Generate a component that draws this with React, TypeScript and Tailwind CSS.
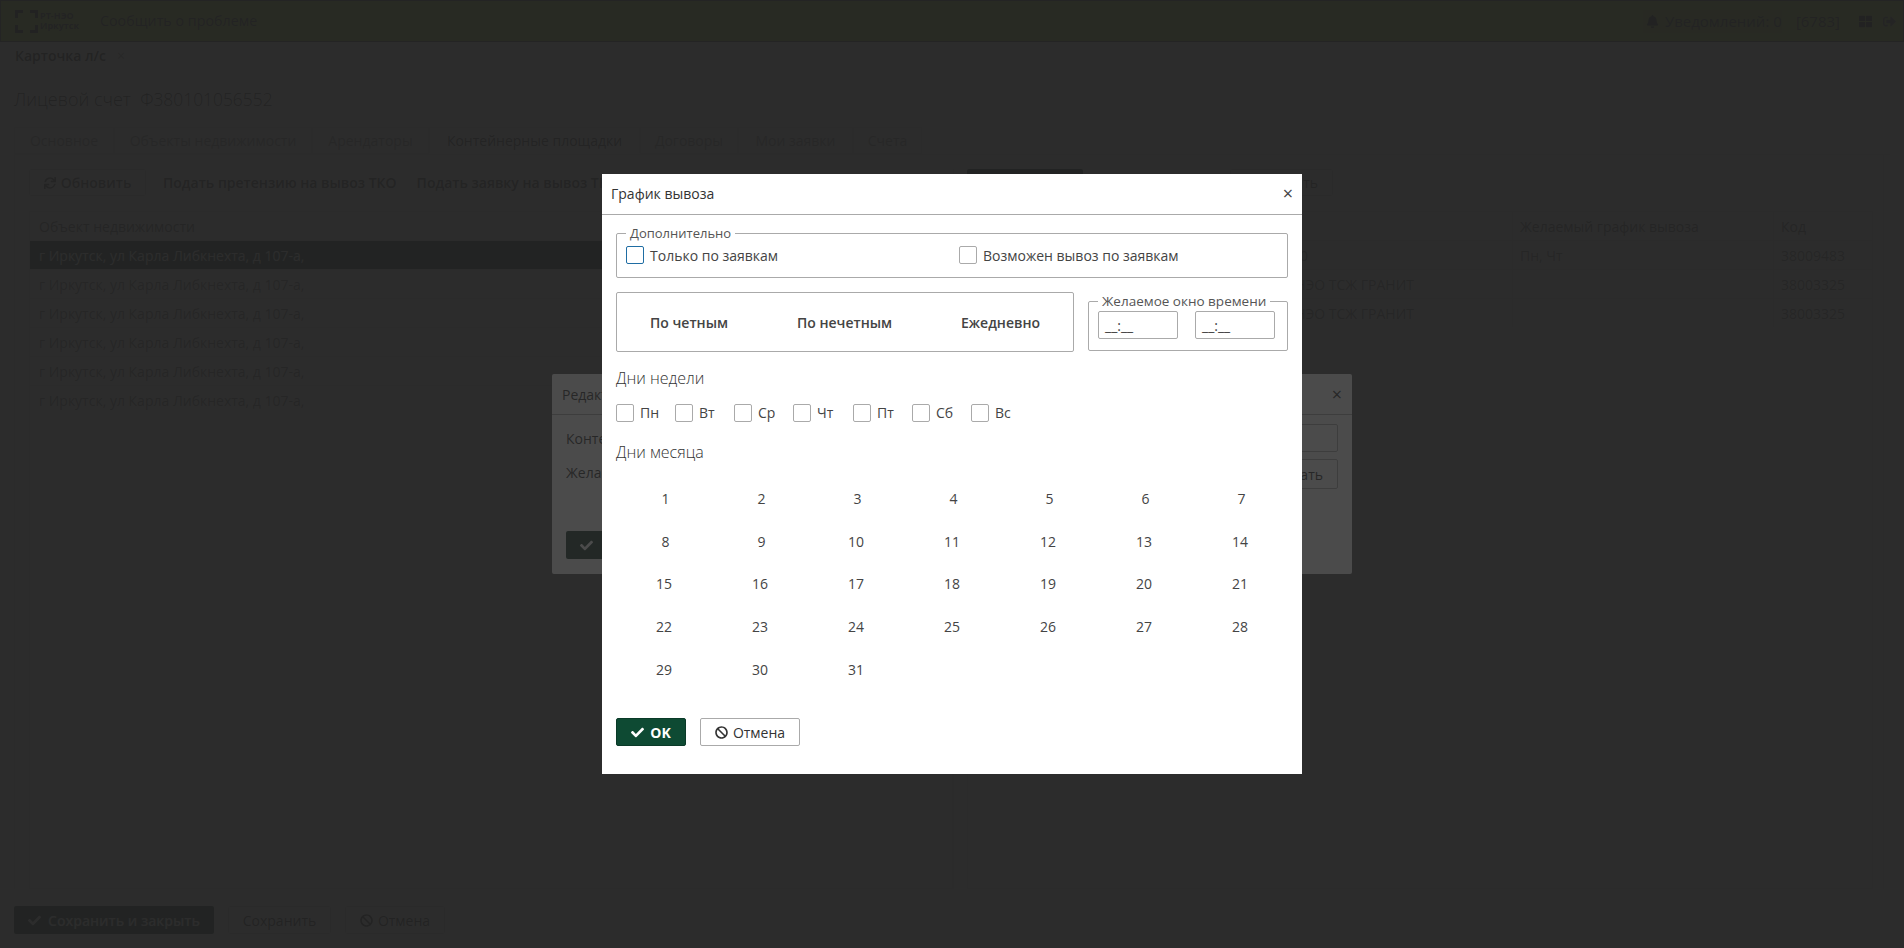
import { FaBan, FaBell, FaCheck, FaSignOutAlt, FaSync, FaThLarge } from 'react-icons/fa';

const FONT = "font-['Open_Sans','Noto_Sans',sans-serif]";

const TABS = [
  { label: 'Основное', width: 'w-[100px]' },
  { label: 'Объекты недвижимости', width: 'w-[198px]' },
  { label: 'Арендаторы', width: 'w-[117px]' },
  { label: 'Контейнерные площадки', width: 'w-[211px]', active: true },
  { label: 'Договоры', width: 'w-[98px]' },
  { label: 'Мои заявки', width: 'w-[115px]' },
  { label: 'Счета', width: 'w-[69px]' },
];

const ADDRESS = 'г Иркутск, ул Карла Либкнехта, д 107-а,';
const WEEK = ['Пн', 'Вт', 'Ср', 'Чт', 'Пт', 'Сб', 'Вс'];
const WEEK_WIDTHS = ['w-[59px]', 'w-[59px]', 'w-[59px]', 'w-[60px]', 'w-[59px]', 'w-[59px]', 'w-[59px]'];
const DAYS = Array.from({ length: 31 }, (_, i) => i + 1);

const RIGHT_ROWS = [
  { name: '0', namePad: 'pr-[106px]', schedule: 'Пн, Чт', code: '38009483' },
  { name: 'РТ-НЭО ТСЖ ГРАНИТ', namePad: '', schedule: '', code: '38003325' },
  { name: 'РТ-НЭО ТСЖ ГРАНИТ', namePad: '', schedule: '', code: '38003325' },
];

function Checkbox({ focused }: { focused?: boolean }) {
  return (
    <span
      className={`block w-[18px] h-[18px] shrink-0 rounded-[2px] border bg-white ${
        focused ? 'border-[#1f6da3]' : 'border-[#aaaaaa]'
      }`}
    />
  );
}

function Logo() {
  return (
    <div className="flex items-center w-[85px] shrink-0">
      <svg width="23" height="23" viewBox="0 0 23 23" fill="none" stroke="#111111" strokeWidth="3">
        <path d="M1.5 8V1.5H8M15 1.5h6.5V8M21.5 15v6.5H15M8 21.5H1.5V15" />
      </svg>
      <div className="ml-[2px] text-[9px] leading-[10px] font-bold text-[#222222]">
        РТ-НЭО
        <br />
        Иркутск
      </div>
    </div>
  );
}

function Page() {
  return (
    <div className="h-[948px] flex flex-col bg-white text-[14px] text-[#222222]">
      {/* top bar */}
      <div className="h-[42px] shrink-0 flex items-center border border-[#333333] bg-[#a0d030] pl-[14px] pr-[7px]">
        <Logo />
        <span className="text-[14.3px]">Сообщить о проблеме</span>
        <div className="ml-auto flex items-center gap-[6px] bg-[#90b828] h-[23px] w-[139px] pl-[3px]">
          <FaBell className="text-[13px] text-black" />
          <span className="text-[15px]">Уведомлений: 0</span>
        </div>
        <span className="ml-[14px] text-[15px]">[6783]</span>
        <FaThLarge className="ml-[19px] text-[13px] text-black" />
        <FaSignOutAlt className="ml-[11px] text-[13px] text-[#444444]" />
      </div>

      {/* open cards */}
      <div className="h-[29px] shrink-0 flex bg-[#eeeeee]">
        <div className="w-[136px] flex items-center bg-white pl-[15px] pb-[2px] font-semibold">
          Карточка л/с <span className="ml-[11px] font-normal text-[#888888]">×</span>
        </div>
      </div>

      <div className="grow min-h-0 flex flex-col px-[14px]">
        <h1 className="mt-[15px] h-[26px] leading-[26px] text-[18px] font-light">
          Лицевой счет&nbsp;&nbsp;<span className="text-[17.4px]">Ф380101056552</span>
        </h1>

        {/* tabs */}
        <div className="mt-[15px] flex h-[28px] border-b border-[#dddddd]">
          {TABS.map((tab) => (
            <div
              key={tab.label}
              className={`${tab.width} flex items-center justify-center border border-[#dddddd] text-[14px] ${
                tab.active ? 'bg-white border-b-white text-[#333333]' : 'bg-[#f2f2f2] text-[#888888]'
              }`}
            >
              {tab.label}
            </div>
          ))}
        </div>

        <div className="grow min-h-0 flex border-x border-[#dddddd] pt-[14px] pl-[14px] pr-[10px] mr-[6px]">
          {/* real estate list */}
          <div className="w-[924px] shrink-0 flex flex-col">
            <div className="h-[27px] flex items-center gap-[17px]">
              <div className="w-[117px] h-[27px] flex items-center justify-center gap-[5px] border border-[#cccccc] rounded-[2px] font-semibold text-[#444444]">
                <FaSync className="text-[12px]" />
                Обновить
              </div>
              <span className="font-semibold text-[#333333]">Подать претензию на вывоз ТКО</span>
              <span className="ml-[3px] font-semibold text-[#333333]">Подать заявку на вывоз ТКО</span>
            </div>
            <div className="mt-[15px] grow border border-[#dddddd]">
              <div className="h-[28px] flex items-center pl-[9px] bg-[#f5f5f5] text-[#555555]">Объект недвижимости</div>
              {Array.from({ length: 6 }, (_, i) => (
                <div
                  key={i}
                  className={`h-[29px] flex items-center pl-[9px] border-t border-[#dddddd] ${
                    i === 0 ? 'bg-[#082a1e] text-white' : 'text-[#666666]'
                  }`}
                >
                  {ADDRESS}
                </div>
              ))}
            </div>
          </div>

          {/* containers list */}
          <div className="grow min-w-0 border-l border-[#dddddd] pl-[13px] flex flex-col">
            <div className="h-[27px] flex items-center gap-[147px]">
              <div className="w-[116px] h-[27px] rounded-[2px] bg-[#082a1e]" />
              <div className="w-[103px] h-[27px] flex items-center justify-end pr-[14px] border border-[#cccccc] rounded-[2px] text-[#444444]">
                Удалить
              </div>
            </div>
            <div className="mt-[15px] grow border border-[#dddddd]">
              <div className="h-[28px] flex items-center bg-[#f5f5f5] text-[#555555]">
                <span className="w-[544px] shrink-0" />
                <span className="w-[261px] shrink-0 h-full flex items-center pl-[7px] border-l border-[#dddddd]">
                  Желаемый график вывоза
                </span>
                <span className="grow h-full flex items-center pl-[7px] border-l border-[#dddddd]">Код</span>
              </div>
              {RIGHT_ROWS.map((row, i) => (
                <div key={i} className="h-[29px] flex items-center border-t border-[#dddddd] text-[#666666]">
                  <span className={`w-[446px] shrink-0 text-right ${row.namePad}`}>{row.name}</span>
                  <span className="w-[98px] shrink-0" />
                  <span className="w-[261px] shrink-0 h-full flex items-center pl-[7px] border-l border-[#dddddd]">
                    {row.schedule}
                  </span>
                  <span className="grow h-full flex items-center pl-[7px] border-l border-[#dddddd]">{row.code}</span>
                </div>
              ))}
            </div>
          </div>
        </div>

        {/* footer actions */}
        <div className="h-[59px] shrink-0 flex items-start gap-[14px] pt-[17px]">
          <div className="w-[200px] h-[28px] flex items-center justify-center gap-[7px] rounded-[2px] bg-[#082a1e] text-white font-semibold">
            <FaCheck className="text-[13px]" />
            Сохранить и закрыть
          </div>
          <div className="w-[103px] h-[28px] flex items-center justify-center border border-[#cccccc] rounded-[2px]">
            Сохранить
          </div>
          <div className="w-[100px] h-[28px] flex items-center justify-center gap-[5px] border border-[#cccccc] rounded-[2px]">
            <FaBan className="text-[13px]" />
            Отмена
          </div>
        </div>
      </div>
    </div>
  );
}

function EditDialog() {
  return (
    <div className="w-[800px] h-[200px] rounded-[2px] bg-white text-[14px] text-[#222222]">
      <div className="h-[41px] flex items-center justify-between px-[10px] border-b border-[#aaaaaa]">
        <span>Редактирование</span>
        <span className="text-[18px] leading-none">×</span>
      </div>
      <div className="px-[14px]">
        <div className="mt-[9px] h-[28px] flex items-center gap-[10px]">
          <span className="w-[100px]">Контейнер</span>
          <span className="grow h-[28px] border border-[#aaaaaa] rounded-[2px]" />
        </div>
        <div className="mt-[7px] h-[30px] flex items-center gap-[10px]">
          <span className="w-[100px] pb-[3px]">Желаемый</span>
          <span className="grow" />
          <span className="w-[110px] h-[30px] flex items-center justify-end pr-[14px] border border-[#aaaaaa] rounded-[2px]">
            Выбрать
          </span>
        </div>
        <div className="mt-[42px] w-[70px] h-[28px] flex items-center pl-[14px] rounded-[2px] bg-[#082a1e] text-white">
          <FaCheck className="text-[13px]" />
        </div>
      </div>
    </div>
  );
}

function ScheduleDialog() {
  return (
    <div className="w-[700px] h-[600px] bg-white text-[14px] text-[#444444]">
      <div className="h-[41px] flex items-center justify-between pl-[9px] pr-[9px] pb-[2px] border-b border-[#aaaaaa]">
        <span className="text-[#333333]">График вывоза</span>
        <span className="text-[18px] leading-none">×</span>
      </div>

      <div className="px-[14px]">
        <fieldset className="mt-[9px] h-[54px] border border-[#aaaaaa] rounded-[2px] pl-[9px]">
          <legend className="px-[4px] text-[13px] leading-[19px] text-[#555555]">Дополнительно</legend>
          <div className="flex items-center h-[24px]">
            <div className="w-[333px] flex items-center gap-[6px]">
              <Checkbox focused />
              <span>Только по заявкам</span>
            </div>
            <div className="flex items-center gap-[6px]">
              <Checkbox />
              <span>Возможен вывоз по заявкам</span>
            </div>
          </div>
        </fieldset>

        <div className="mt-[14px] flex items-start justify-between">
          <div className="w-[458px] h-[60px] flex items-center justify-between px-[33px] border border-[#aaaaaa] rounded-[2px] font-semibold">
            <span>По четным</span>
            <span>По нечетным</span>
            <span>Ежедневно</span>
          </div>
          <fieldset className="w-[200px] h-[59px] border border-[#aaaaaa] rounded-[2px] pl-[9px] pr-[12px]">
            <legend className="px-[4px] text-[13.5px] leading-[19px] text-[#555555]">Желаемое окно времени</legend>
            <div className="flex justify-between">
              <div className="w-[80px] h-[28px] border border-[#aaaaaa] rounded-[2px] pl-[6px] leading-[27px]">__:__</div>
              <div className="w-[80px] h-[28px] border border-[#aaaaaa] rounded-[2px] pl-[6px] leading-[27px]">__:__</div>
            </div>
          </fieldset>
        </div>

        <h3 className="mt-[15px] h-[22px] leading-[22px] text-[16px] font-light text-[#333333]">Дни недели</h3>
        <div className="mt-[13px] flex">
          {WEEK.map((day, i) => (
            <div key={day} className={`${WEEK_WIDTHS[i]} flex items-center gap-[6px]`}>
              <Checkbox />
              <span>{day}</span>
            </div>
          ))}
        </div>
        <h3 className="mt-[18px] h-[22px] leading-[22px] text-[16px] font-light text-[#333333]">Дни месяца</h3>

        <div className="mt-[14px] grid grid-cols-7 auto-rows-[42.7px]">
          {DAYS.map((day) => (
            <div key={day} className={`flex items-center justify-center ${day < 10 ? 'pl-[3px]' : ''}`}>
              {day}
            </div>
          ))}
        </div>

        <div className="mt-[28px] flex gap-[14px]">
          <div className="w-[70px] h-[28px] flex items-center justify-center gap-[6px] rounded-[2px] border border-[#0a3a28] bg-[#0e4a33] text-white font-bold">
            <FaCheck className="text-[13px]" />
            OK
          </div>
          <div className="w-[100px] h-[28px] flex items-center justify-center gap-[5px] rounded-[2px] border border-[#aaaaaa] text-[#333333]">
            <FaBan className="text-[13px]" />
            Отмена
          </div>
        </div>
      </div>
    </div>
  );
}

export default function App() {
  return (
    <div className={`relative h-[948px] overflow-hidden ${FONT}`}>
      <Page />
      {/* first modal layer */}
      <div className="absolute inset-0 bg-black opacity-[.74]" />
      <div className="absolute inset-0 flex items-center justify-center">
        <EditDialog />
      </div>
      {/* second modal layer */}
      <div className="absolute inset-0 bg-[#292929] opacity-[.84]" />
      <div className="absolute inset-0 flex items-center justify-center">
        <ScheduleDialog />
      </div>
    </div>
  );
}
